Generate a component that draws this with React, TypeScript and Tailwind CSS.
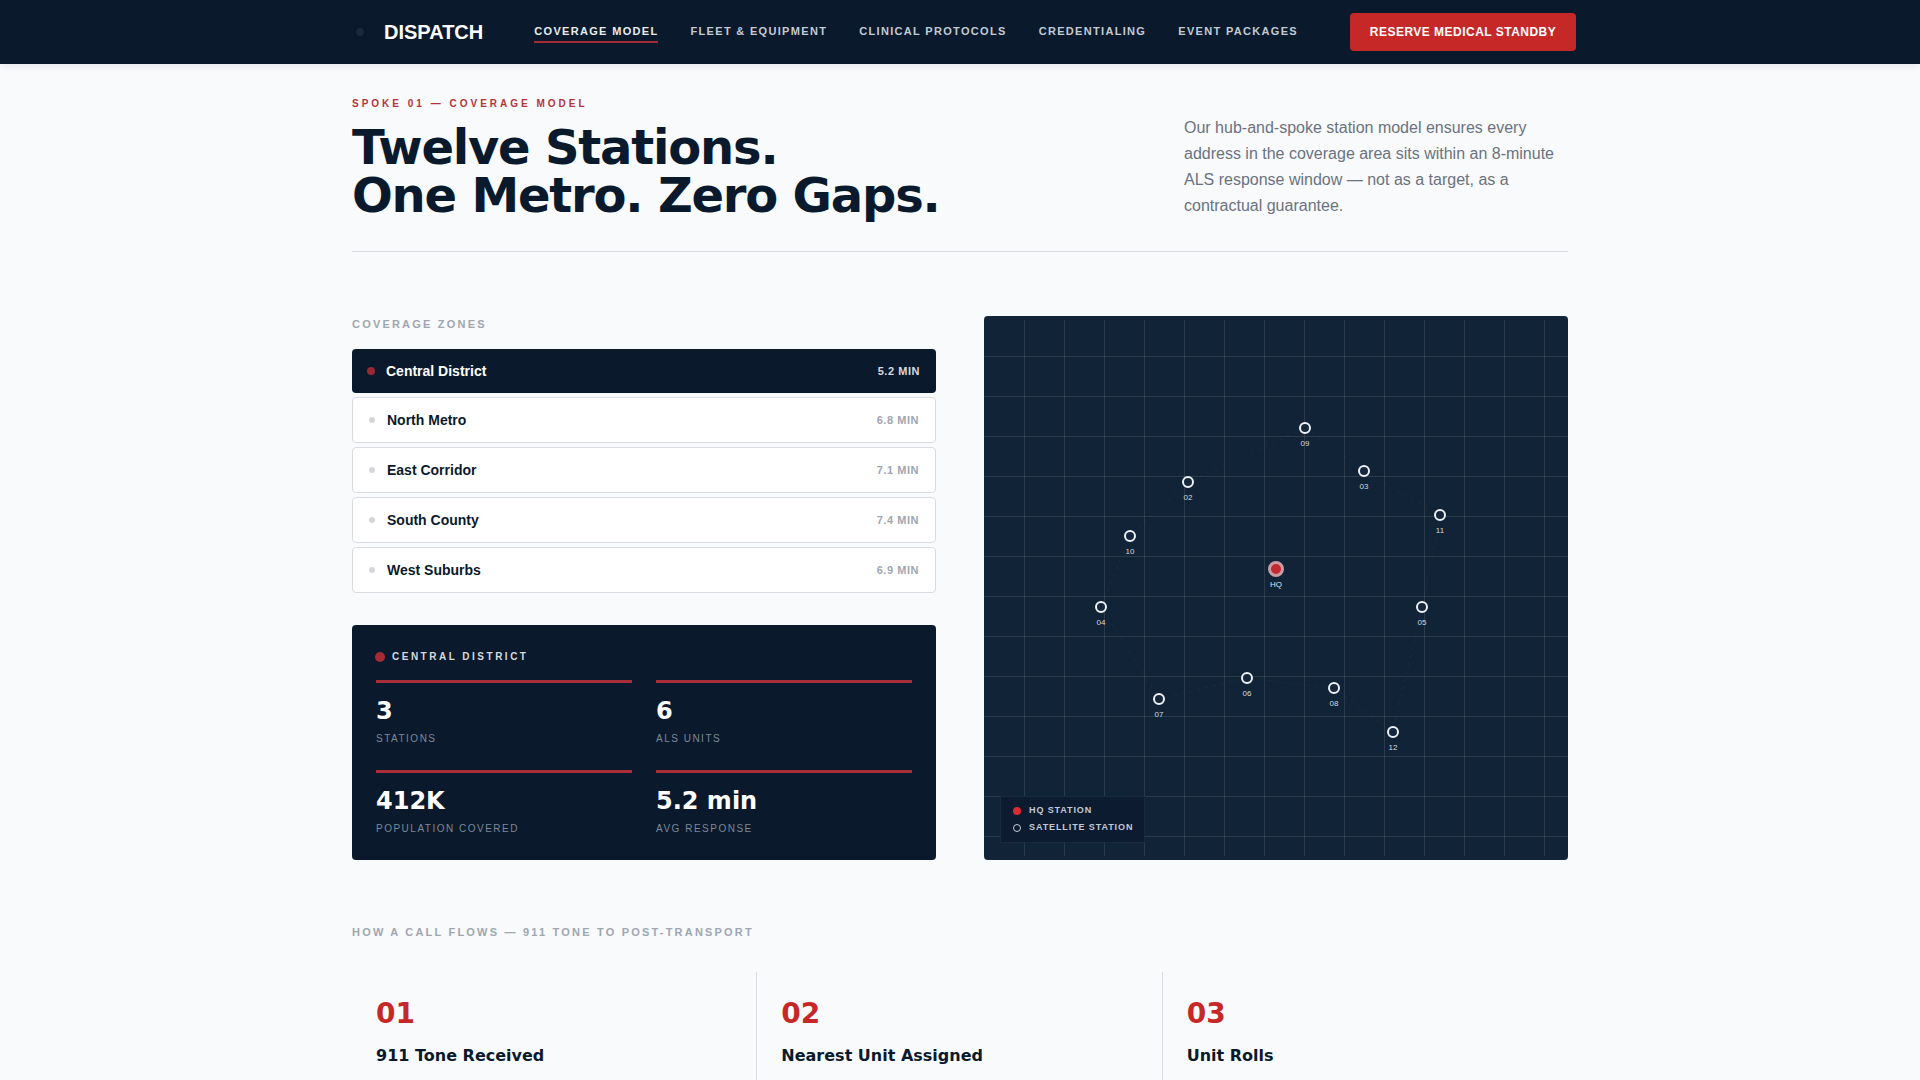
const navLinks = ["COVERAGE MODEL", "FLEET & EQUIPMENT", "CLINICAL PROTOCOLS", "CREDENTIALING", "EVENT PACKAGES"];

const zones = [
  { name: "Central District", time: "5.2 MIN", active: true },
  { name: "North Metro", time: "6.8 MIN" },
  { name: "East Corridor", time: "7.1 MIN" },
  { name: "South County", time: "7.4 MIN" },
  { name: "West Suburbs", time: "6.9 MIN" },
];

const stats = [
  { value: "3", label: "STATIONS" },
  { value: "6", label: "ALS UNITS" },
  { value: "412K", label: "POPULATION COVERED" },
  { value: "5.2 min", label: "AVG RESPONSE" },
];

// station centers, px inside the 584x544 map
const stations = [
  { id: "09", x: 321, y: 112 },
  { id: "02", x: 204, y: 166 },
  { id: "03", x: 380, y: 155 },
  { id: "11", x: 456, y: 199 },
  { id: "10", x: 146, y: 220 },
  { id: "04", x: 117, y: 291 },
  { id: "05", x: 438, y: 291 },
  { id: "06", x: 263, y: 362 },
  { id: "08", x: 350, y: 372 },
  { id: "07", x: 175, y: 383 },
  { id: "12", x: 409, y: 416 },
];

const ring = "321,112 380,155 456,199 438,291 409,416 350,372 263,362 175,383 117,291 146,220 204,166 321,112";

const steps = [
  { n: "01", title: "911 Tone Received" },
  { n: "02", title: "Nearest Unit Assigned" },
  { n: "03", title: "Unit Rolls" },
];

const MapGrid = () => (
  <svg className="absolute inset-0" width="584" height="544">
    {Array.from({ length: 14 }, (_, i) => (
      <line key={i} x1={40.5 + i * 40} x2={40.5 + i * 40} y1="4" y2="540" stroke="#fff" strokeOpacity="0.11" />
    ))}
    {Array.from({ length: 13 }, (_, i) => (
      <line key={i} y1={40.5 + i * 40} y2={40.5 + i * 40} x1="0" x2="584" stroke="#fff" strokeOpacity="0.11" />
    ))}
    <polyline points={ring} fill="none" stroke="#fff" strokeOpacity="0.04" strokeDasharray="3 5" />
  </svg>
);

export default function App() {
  return (
    <div className="h-screen overflow-hidden bg-[#f8fafc] font-['Liberation_Sans',Arial,sans-serif]">
      <header className="relative z-10 h-16 bg-[#0a1a2c] shadow-[0_2px_8px_rgba(10,26,44,0.08)]">
        <div className="flex h-full w-[1280px] mx-auto px-8 items-center">
          <div className="flex items-center shrink-0">
            <span className="ml-1 mr-5 h-2 w-2 rounded-full bg-[#1b2a3f]" />
            <span className="text-[20px] font-bold text-white">DISPATCH</span>
          </div>
          <nav className="ml-[51px] flex items-center gap-8 shrink-0">
            {navLinks.map((l, i) => (
              <a
                key={l}
                className={`border-b-2 pb-px pt-[2px] text-[11px] font-bold tracking-[0.12em] whitespace-nowrap ${i === 0 ? "border-[#a82a35] text-[#e8ecf1]" : "border-transparent text-[#c3cad5]"}`}
              >
                {l}
              </a>
            ))}
          </nav>
          <button className="ml-[52px] h-[38px] w-[226px] shrink-0 rounded-sm bg-[#c62828] text-[12px] font-bold tracking-[0.04em] text-white whitespace-nowrap">
            RESERVE MEDICAL STANDBY
          </button>
        </div>
      </header>

      <main className="w-[1280px] mx-auto px-8">
        <section className="flex justify-between border-b border-[#d8dce2] h-[188px] pt-[33px]">
          <div>
            <p className="text-[10px] leading-[14px] font-bold tracking-[0.3em] text-[#b5333a]">SPOKE 01 — COVERAGE MODEL</p>
            <h1 className="mt-3 font-['DejaVu_Sans',sans-serif] text-[48px] leading-[48px] font-bold tracking-[-0.025em] text-[#0a1a2c]">
              Twelve Stations.
              <br />
              One Metro. Zero Gaps.
            </h1>
          </div>
          <p className="w-[384px] mt-[18px] text-[16px] leading-[26px] text-[#6b7280]">
            Our hub-and-spoke station model ensures every address in the coverage area sits within an 8-minute ALS response window — not as a target, as a contractual guarantee.
          </p>
        </section>

        <section className="mt-16 grid grid-cols-2 gap-12">
          <div>
            <h2 className="mt-px text-[11px] leading-[14px] font-bold tracking-[0.2em] text-[#a0a6b0]">COVERAGE ZONES</h2>
            <ul className="mt-[18px] flex flex-col gap-1">
              {zones.map((z) =>
                z.active ? (
                  <li key={z.name} className="flex h-11 items-center rounded-sm bg-[#0a1a2c] pl-[15px] pr-4">
                    <span className="h-2 w-2 rounded-full bg-[#9a2832]" />
                    <span className="ml-[11px] text-[14px] font-bold text-white">{z.name}</span>
                    <span className="ml-auto text-[11px] font-bold tracking-[0.05em] text-[#d5d9df]">{z.time}</span>
                  </li>
                ) : (
                  <li key={z.name} className="flex h-[46px] items-center rounded-sm border border-[#d8dce2] bg-white pl-4 pr-4">
                    <span className="h-1.5 w-1.5 rounded-full bg-[#d3d6db]" />
                    <span className="ml-3 text-[14px] font-bold text-[#0a1a2c]">{z.name}</span>
                    <span className="ml-auto text-[11px] font-bold tracking-[0.05em] text-[#a0a6b0]">{z.time}</span>
                  </li>
                ),
              )}
            </ul>

            <div className="mt-8 h-[235px] rounded-sm bg-[#0a1a2c] px-6 pt-6">
              <div className="-ml-px mt-px flex items-center">
                <span className="h-[10px] w-[10px] rounded-full bg-[#a82a35]" />
                <span className="ml-[7px] text-[10px] leading-[14px] font-bold tracking-[0.25em] text-[#d5d9df]">CENTRAL DISTRICT</span>
              </div>
              <div className="mt-4 grid grid-cols-2 gap-x-6 gap-y-[22px]">
                {stats.map((s) => (
                  <div key={s.label} className="h-[68px] border-t-[3px] border-[#a82f38] pt-[13px]">
                    <div className="font-['DejaVu_Sans',sans-serif] text-[24px] leading-[30px] font-bold text-white">{s.value}</div>
                    <div className="mt-[6px] text-[10px] leading-[14px] tracking-[0.15em] text-[#7d8896]">{s.label}</div>
                  </div>
                ))}
              </div>
            </div>
          </div>

          <div className="relative h-[544px] overflow-hidden rounded-sm bg-[#112337]">
            <MapGrid />
            {stations.map((s) => (
              <div key={s.id} className="absolute" style={{ left: s.x, top: s.y }}>
                <span className="absolute -left-[6px] -top-[6px] h-3 w-3 rounded-full border-2 border-[#eef2f6] bg-[#15263d]" />
                <span className="absolute -left-4 top-[11px] w-8 text-center text-[8px] leading-[10px] text-[#d5d9df]">{s.id}</span>
              </div>
            ))}
            <div className="absolute" style={{ left: 292, top: 253 }}>
              <span className="absolute -left-2 -top-2 h-4 w-4 rounded-full border-[3px] border-[#c89ca2] bg-[#c02a30]" />
              <span className="absolute -left-4 top-[11px] w-8 text-center text-[8px] leading-[10px] text-[#dfe3e8]">HQ</span>
            </div>

            <div className="absolute bottom-[17px] left-4 flex flex-col gap-[6px] border border-[#182a41] bg-[#0c1b2f] px-3 py-2 w-[145px] h-[47px]">
              <div className="flex h-[11px] items-center gap-2 text-[9px] font-bold tracking-[0.1em] text-[#c3cad5] whitespace-nowrap">
                <span className="h-2 w-2 shrink-0 rounded-full bg-[#d92d32]" />
                HQ STATION
              </div>
              <div className="flex h-[11px] items-center gap-2 text-[9px] font-bold tracking-[0.1em] text-[#c3cad5] whitespace-nowrap">
                <span className="h-2 w-2 shrink-0 rounded-full border border-[#c3cad5]" />
                SATELLITE STATION
              </div>
            </div>
          </div>
        </section>

        <section className="mt-[65px]">
          <h2 className="text-[11px] leading-[14px] font-bold tracking-[0.2em] text-[#a0a6b0]">HOW A CALL FLOWS — 911 TONE TO POST-TRANSPORT</h2>
          <div className="mt-[33px] grid grid-cols-3 h-[220px]">
            {steps.map((s, i) => (
              <div key={s.n} className={`px-6 pt-6 ${i < 2 ? "border-r border-[#d8dce2]" : ""}`}>
                <div className="font-['DejaVu_Sans',sans-serif] text-[28px] leading-[36px] font-bold text-[#c62828]">{s.n}</div>
                <div className="mt-3 font-['DejaVu_Sans',sans-serif] text-[16px] leading-[24px] font-bold text-[#0a1a2c]">{s.title}</div>
              </div>
            ))}
          </div>
        </section>
      </main>
    </div>
  );
}
